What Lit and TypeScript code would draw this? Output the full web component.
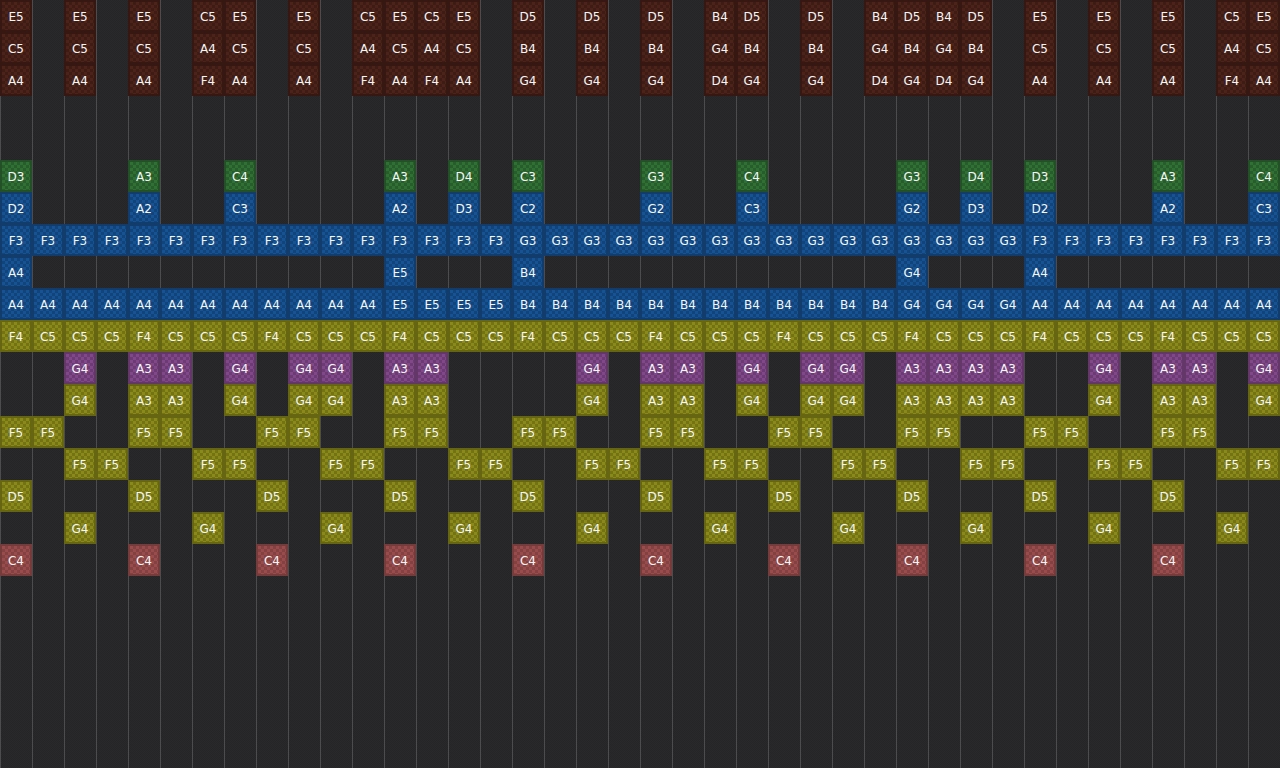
import { css, html, LitElement } from "lit";
import { customElement } from "lit/decorators.js";

type Tone = "maroon" | "green" | "blue" | "olive" | "purple" | "rose";
type Cell = [number, string];

const range = (from: number, to: number, step = 1) => {
  const out: number[] = [];
  for (let i = from; i <= to; i += step) out.push(i);
  return out;
};

const at = (cols: number[], label: string | ((c: number) => string)): Cell[] =>
  cols.map((c) => [c, typeof label === "string" ? label : label(c)]);

const chordCols: Cell[] = [
  [0, "E5"], [2, "E5"], [4, "E5"], [6, "C5"], [7, "E5"], [9, "E5"], [11, "C5"], [12, "E5"],
  [13, "C5"], [14, "E5"], [16, "D5"], [18, "D5"], [20, "D5"], [22, "B4"], [23, "D5"], [25, "D5"],
  [27, "B4"], [28, "D5"], [29, "B4"], [30, "D5"], [32, "E5"], [34, "E5"], [36, "E5"], [38, "C5"], [39, "E5"],
];
const down: Record<string, string> = { E5: "C5", C5: "A4", D5: "B4", B4: "G4" };
const down2: Record<string, string> = { E5: "A4", C5: "F4", D5: "G4", B4: "D4" };

const high: Cell[] = [
  [0, "D3"], [4, "A3"], [7, "C4"], [12, "A3"], [14, "D4"], [16, "C3"], [20, "G3"], [23, "C4"], [28, "G3"], [30, "D4"], [32, "D3"], [36, "A3"], [39, "C4"],
];
const low: Cell[] = high.map(([c, n]) => [c, n[0] + (Number(n[1]) - 1)]);

const padCols: Cell[] = [
  [2, "G4"], [4, "A3"], [5, "A3"], [7, "G4"], [9, "G4"], [10, "G4"], [12, "A3"], [13, "A3"], [18, "G4"], [20, "A3"], [21, "A3"],
  [23, "G4"], [25, "G4"], [26, "G4"], [28, "A3"], [29, "A3"], [30, "A3"], [31, "A3"], [34, "G4"], [36, "A3"], [37, "A3"], [39, "G4"],
];

const rows: { tone: Tone; cells: Cell[] }[] = [
  { tone: "maroon", cells: chordCols },
  { tone: "maroon", cells: chordCols.map(([c, n]) => [c, down[n]] as Cell) },
  { tone: "maroon", cells: chordCols.map(([c, n]) => [c, down2[n]] as Cell) },
  { tone: "maroon", cells: [] },
  { tone: "maroon", cells: [] },
  { tone: "green", cells: high },
  { tone: "blue", cells: low },
  { tone: "blue", cells: at(range(0, 39), (c) => (c >= 16 && c < 32 ? "G3" : "F3")) },
  { tone: "blue", cells: [[0, "A4"], [12, "E5"], [16, "B4"], [28, "G4"], [32, "A4"]] },
  { tone: "blue", cells: at(range(0, 39), (c) => (c < 12 ? "A4" : c < 16 ? "E5" : c < 28 ? "B4" : c < 32 ? "G4" : "A4")) },
  { tone: "olive", cells: at(range(0, 39), (c) => (c % 4 === 0 ? "F4" : "C5")) },
  { tone: "purple", cells: padCols },
  { tone: "olive", cells: padCols },
  { tone: "olive", cells: at(range(0, 39).filter((c) => c % 4 < 2), "F5") },
  { tone: "olive", cells: at(range(0, 39).filter((c) => c % 4 >= 2), "F5") },
  { tone: "olive", cells: at(range(0, 36, 4), "D5") },
  { tone: "olive", cells: at(range(2, 38, 4), "G4") },
  { tone: "rose", cells: at(range(0, 36, 4), "C4") },
];

@customElement("app-root")
export class AppRoot extends LitElement {
  render() {
    return html`
      <div class="roll">
        ${rows.map(
          (row) => html`
            <div class="row">
              ${row.cells.map(
                ([col, note]) =>
                  html`<div class="note ${row.tone}" style="grid-column: ${col + 1}">${note}</div>`
              )}
            </div>
          `
        )}
      </div>
    `;
  }

  static styles = css`
    :host {
      display: block;
      width: 1280px;
      height: 768px;
      overflow: hidden;
    }

    .roll {
      height: 768px;
      background-color: #272729;
      background-image:
        linear-gradient(to right, #4c4c4e 1px, transparent 1px),
        repeating-conic-gradient(#29292b 0 25%, #252527 0 50%);
      background-size: 32px 100%, 2px 2px;
    }

    .row {
      display: grid;
      grid-template-columns: repeat(40, 32px);
      grid-auto-rows: 32px;
      height: 32px;
    }

    .note {
      --base: #444;
      --dark: #333;
      --edge: #222;
      box-sizing: border-box;
      grid-row: 1;
      display: flex;
      align-items: center;
      justify-content: center;
      padding-top: 1px;
      border: 2px solid var(--edge);
      background-color: var(--base);
      background-image: repeating-conic-gradient(var(--dark) 0 25%, var(--base) 0 50%);
      background-size: 6px 6px;
      background-clip: padding-box;
      color: #f6f6f6;
      font: 12px "DejaVu Sans", Verdana, sans-serif;
    }

    .maroon { --base: #4c2219; --dark: #3e1c16; --edge: #361712; }
    .green { --base: #2f7033; --dark: #285c2c; --edge: #245027; }
    .blue { --base: #155394; --dark: #124379; --edge: #113c6c; }
    .olive { --base: #8a8a1a; --dark: #737315; --edge: #666612; }
    .purple { --base: #804888; --dark: #6d3b74; --edge: #633868; }
    .rose { --base: #9a4c4c; --dark: #834242; --edge: #763c3c; }
  `;
}
